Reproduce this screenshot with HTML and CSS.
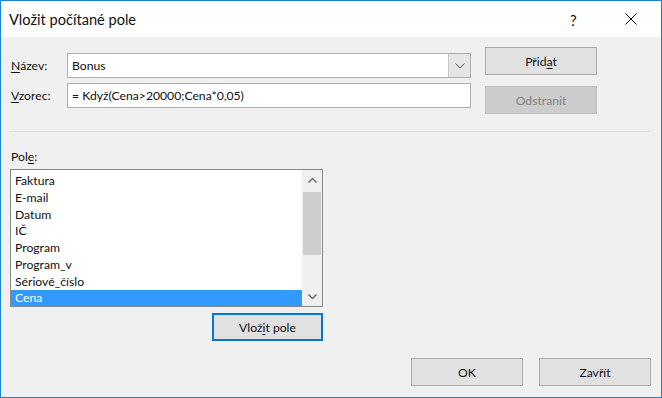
FILE: index.html
```html
<!DOCTYPE html>
<html lang="cs">
<head>
<meta charset="utf-8">
<title>Vložit počítané pole</title>
<link rel="stylesheet" href="styles.css">
</head>
<body>
<div class="window">
  <div class="titlebar">
    <span class="title">Vložit počítané pole</span>
    <span class="help">?</span>
    <span class="close">
      <svg width="12" height="12" viewBox="0 0 12 12"><path d="M0.5 0.5 L11.5 11.5 M11.5 0.5 L0.5 11.5" stroke="#000" stroke-width="1" fill="none"/></svg>
    </span>
  </div>
  <div class="content">
    <div class="top">
      <div class="form">
        <label class="lbl"><u>N</u>ázev:</label>
        <div class="combo">
          <span class="combo-text">Bonus</span>
          <span class="combo-btn">
            <svg width="10" height="6" viewBox="0 0 10 6"><path d="M0.5 0.5 L5 5 L9.5 0.5" stroke="#555" stroke-width="1" fill="none"/></svg>
          </span>
        </div>
        <label class="lbl"><u>V</u>zorec:</label>
        <div class="input">= Když(Cena&gt;20000;Cena*0,05)</div>
      </div>
      <div class="side">
        <button class="btn">Přid<u>a</u>t</button>
        <button class="btn disabled">Odstranit</button>
      </div>
    </div>
    <div class="sep"></div>
    <div class="fields">
      <div class="lbl pole">Pol<u>e</u>:</div>
      <div class="listbox">
        <ul class="items">
          <li>Faktura</li>
          <li>E-mail</li>
          <li>Datum</li>
          <li>IČ</li>
          <li>Program</li>
          <li>Program_v</li>
          <li>Sériové_číslo</li>
          <li class="sel">Cena</li>
        </ul>
        <div class="scrollbar">
          <span class="arrow">
            <svg width="9" height="5" viewBox="0 0 9 5"><path d="M0.5 4.5 L4.5 0.5 L8.5 4.5" stroke="#606060" stroke-width="1.3" fill="none"/></svg>
          </span>
          <div class="track"><div class="thumb"></div></div>
          <span class="arrow">
            <svg width="9" height="5" viewBox="0 0 9 5"><path d="M0.5 0.5 L4.5 4.5 L8.5 0.5" stroke="#606060" stroke-width="1.3" fill="none"/></svg>
          </span>
        </div>
      </div>
      <div class="insert-row">
        <button class="btn focus">Vlož<u>i</u>t pole</button>
      </div>
    </div>
    <div class="footer">
      <button class="btn">OK</button>
      <button class="btn">Zavřít</button>
    </div>
  </div>
</div>
</body>
</html>
```
FILE: styles.css
```css
html, body {
  margin: 0;
  padding: 0;
  background: #ffffff;
}
body {
  font-family: Lato, "Noto Sans", sans-serif;
  font-size: 12.2px;
  color: #111;
}
.window {
  width: 662px;
  height: 398px;
  box-sizing: border-box;
  border: 1px solid #1883d7;
  display: flex;
  flex-direction: column;
  background: #f0f0f0;
}
.titlebar {
  height: 36px;
  background: #fff;
  display: flex;
  align-items: center;
  padding-left: 8px;
  flex: none;
}
.title {
  font-size: 14.6px;
  flex: 1;
  padding-top: 1px;
}
.help {
  font-size: 15px;
  width: 16px;
  margin-right: 39px;
  padding-top: 1px;
}
.close {
  width: 12px;
  height: 12px;
  margin-right: 24px;
  display: flex;
}
.content {
  flex: 1;
  padding: 10px 10px 0 9px;
  display: flex;
  flex-direction: column;
}
.top {
  display: flex;
  align-items: flex-start;
}
.form {
  margin-top: 6px;
  width: 461px;
  display: grid;
  grid-template-columns: 57px 404px;
  grid-auto-rows: 25px;
  row-gap: 5px;
  align-items: center;
}
.lbl {
  padding-left: 1px;
  line-height: 16px;
}
u {
  text-decoration-thickness: 1px;
  text-underline-offset: 2px;
}
.combo {
  height: 25px;
  box-sizing: border-box;
  border: 1px solid #abadb3;
  background: #fff;
  display: flex;
  align-items: stretch;
}
.combo-text {
  flex: 1;
  padding-left: 4px;
  line-height: 23px;
}
.combo-btn {
  width: 21px;
  background: #e5e5e5;
  border-left: 1px solid #c8c8c8;
  display: flex;
  align-items: center;
  justify-content: center;
  margin: 0;
}
.input {
  height: 25px;
  box-sizing: border-box;
  border: 1px solid #abadb3;
  background: #fff;
  padding-left: 4px;
  line-height: 23px;
}
.side {
  margin-left: 14px;
  display: flex;
  flex-direction: column;
  gap: 11px;
}
.btn {
  width: 112px;
  height: 28px;
  box-sizing: border-box;
  border: 1px solid #adadad;
  background: #e1e1e1;
  font-family: inherit;
  font-size: 12.2px;
  color: #111;
  padding: 0;
  margin: 0;
}
.btn.disabled {
  color: #838383;
  border-color: #bfbfbf;
  background: #cccccc;
}
.btn.focus {
  border: 2px solid #0078d7;
  width: 111px;
}
.sep {
  height: 1px;
  background: #dcdcdc;
  margin: 17px 1px 0 -1px;
}
.fields {
  width: 313px;
  display: flex;
  flex-direction: column;
  margin-top: 17px;
}
.pole {
  margin-bottom: 4px;
}
.listbox {
  height: 138px;
  box-sizing: border-box;
  border: 1px solid #828790;
  background: #fff;
  display: flex;
}
.items {
  list-style: none;
  margin: 0;
  padding: 3px 0 0 0;
  flex: 1;
  overflow: hidden;
}
.items li {
  height: 16.75px;
  line-height: 16.75px;
  padding-left: 4px;
}
.items li.sel {
  background: #3399ff;
  color: #fff;
}
.scrollbar {
  width: 20px;
  background: #f0f0f0;
  display: flex;
  flex-direction: column;
}
.arrow {
  height: 20px;
  display: flex;
  align-items: center;
  justify-content: center;
  flex: none;
}
.track {
  flex: 1;
  padding: 2px 1px 0 1px;
}
.thumb {
  height: 63px;
  background: #cdcdcd;
}
.insert-row {
  display: flex;
  justify-content: flex-end;
  margin-top: 6px;
}
.footer {
  display: flex;
  justify-content: flex-end;
  gap: 16px;
  margin-top: 17px;
}
```
